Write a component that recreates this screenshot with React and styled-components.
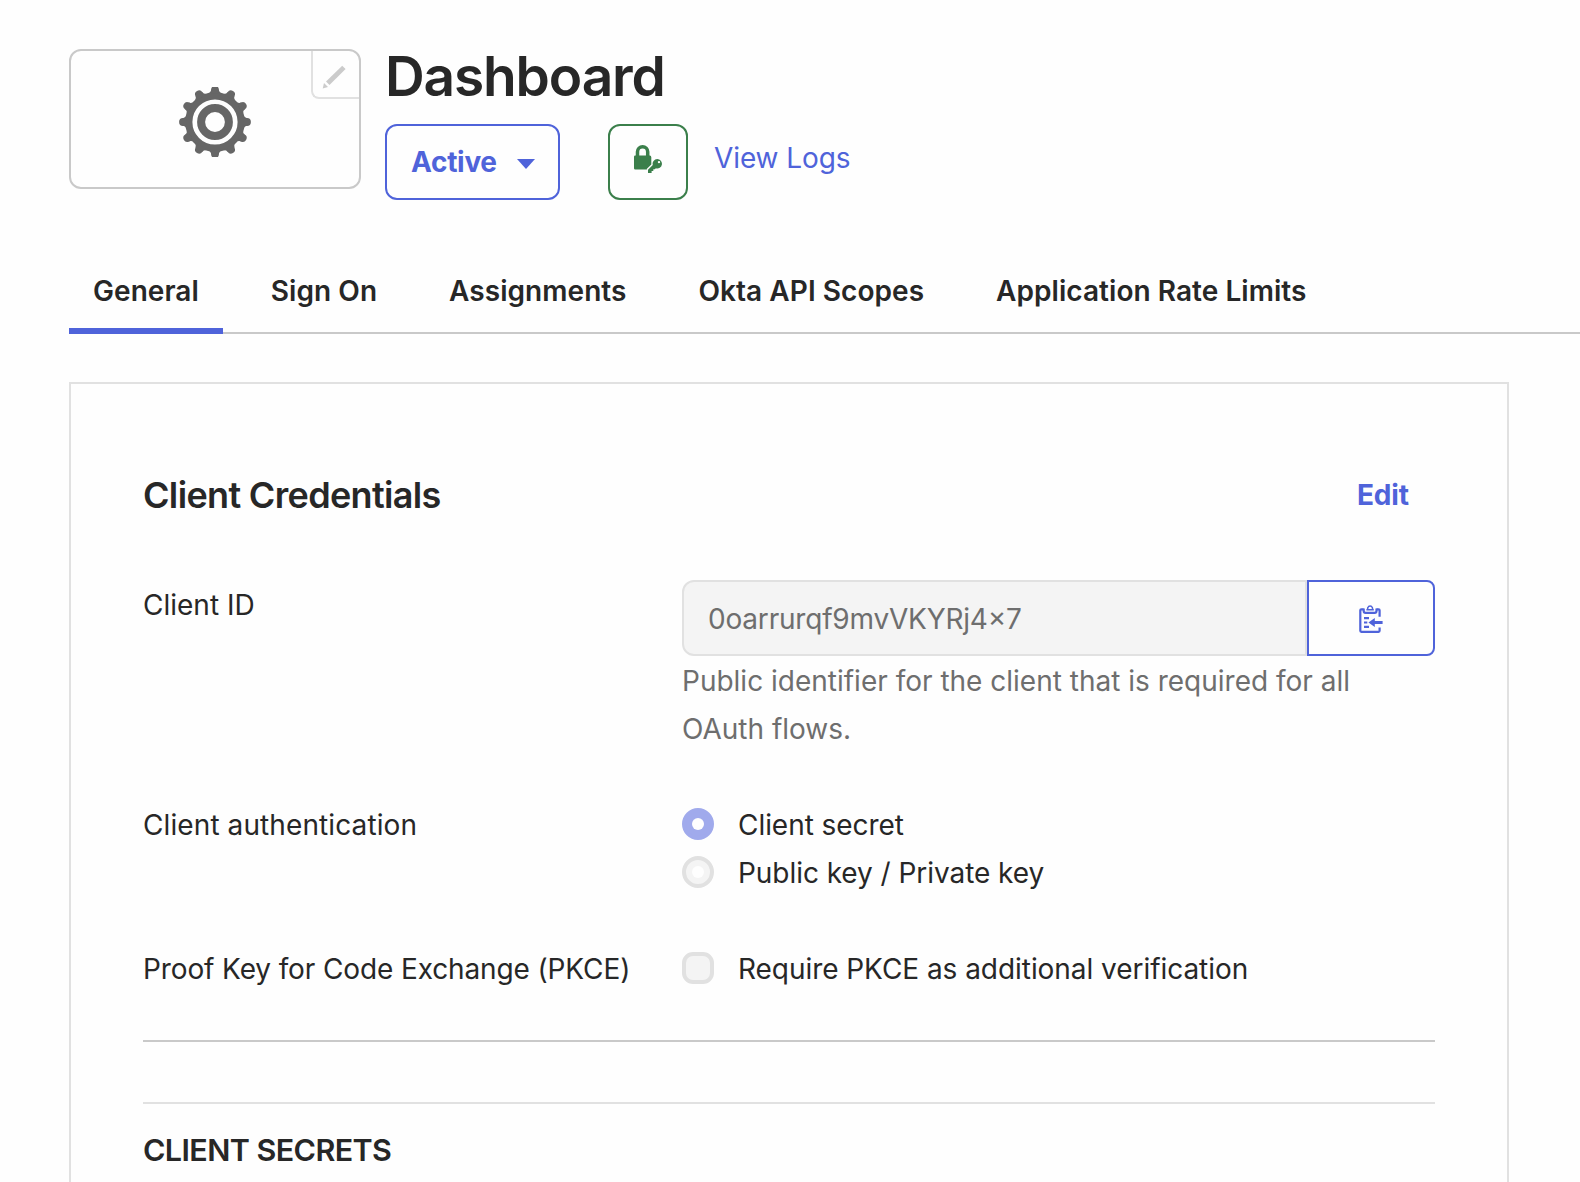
import React from "react";
import styled, { createGlobalStyle, css } from "styled-components";

const color = {
  blue: "#4f63da",
  green: "#3b7f4b",
  ink: "#272727",
  muted: "#6e6e6e",
  line: "#c9c9c9",
  lineSoft: "#e1e1e1",
  field: "#f4f4f4",
  page: "#fefefe",
};

const GlobalStyle = createGlobalStyle`
  *, *::before, *::after { box-sizing: border-box; }
  html, body { margin: 0; padding: 0; background: ${color.page}; }
  body { overflow: hidden; }
`;

const Page = styled.main`
  width: 1580px;
  height: 1182px;
  overflow: hidden;
  padding: 46px 0 0 69px;
  background: ${color.page};
  color: ${color.ink};
  font-family: Inter, "Liberation Sans", sans-serif;
  font-size: 28px;
  line-height: 48px;
`;

const Header = styled.header`
  display: flex;
  align-items: flex-start;
  gap: 24px;
  height: 154px;
`;

const LogoCard = styled.div`
  position: relative;
  display: flex;
  align-items: center;
  justify-content: center;
  width: 292px;
  height: 140px;
  margin-top: 3px;
  border: 2px solid ${color.line};
  border-radius: 12px;
  padding: 5px 0 0 0;
`;

const EditCorner = styled.button`
  position: absolute;
  top: 0;
  right: 0;
  display: flex;
  align-items: flex-start;
  width: 48px;
  height: 48px;
  padding: 14px 0 0 9px;
  background: none;
  border: solid ${color.lineSoft};
  border-width: 0 0 2px 2px;
  border-radius: 0 0 0 8px;
`;

const Title = styled.h1`
  margin: 0 0 18px;
  font-size: 55px;
  line-height: 60px;
  font-weight: 600;
  letter-spacing: -1.15px;
`;

const Actions = styled.div`
  display: flex;
  align-items: flex-start;
`;

const outlined = css`
  display: flex;
  align-items: center;
  height: 76px;
  background: ${color.page};
  border: 2px solid currentColor;
  border-radius: 12px;
  font: inherit;
`;

const StatusButton = styled.button`
  ${outlined}
  width: 175px;
  padding: 0 0 0 24px;
  gap: 20px;
  color: ${color.blue};
  font-weight: 700;
  letter-spacing: -0.3px;
`;

const Caret = styled.span`
  width: 0;
  height: 0;
  margin-top: 4px;
  border: solid transparent;
  border-width: 10px 9.5px 0;
  border-top-color: currentColor;
`;

const SecurityButton = styled.button`
  ${outlined}
  justify-content: center;
  width: 80px;
  margin: 0 26px 0 48px;
  padding: 0 0 6px;
  color: ${color.green};
`;

const Link = styled.a`
  margin-top: ${(p) => p.$top || 0}px;
  margin-right: ${(p) => p.$right || 0}px;
  color: ${color.blue};
  font-weight: ${(p) => (p.$strong ? 700 : 400)};
  letter-spacing: -0.1px;
  text-decoration: none;
`;

const Tabs = styled.nav`
  display: flex;
  gap: 24px;
  height: 67px;
  margin-top: 67px;
  border-bottom: 2px solid ${color.line};
`;

const Tab = styled.a`
  height: 67px;
  padding: 0 24px;
  font-weight: 600;
  letter-spacing: 0.05px;
  white-space: nowrap;
  border-bottom: 6px solid ${(p) => (p.$active ? color.blue : "transparent")};
`;

const Panel = styled.section`
  width: 1440px;
  height: 900px;
  margin-top: 48px;
  padding: 87px 72px 0;
  border: 2px solid ${color.lineSoft};
`;

const PanelHead = styled.div`
  display: flex;
  justify-content: space-between;
  margin-bottom: 61px;
`;

const PanelTitle = styled.h2`
  margin: 0;
  font-size: 36px;
  line-height: 48px;
  font-weight: 600;
  letter-spacing: -0.66px;
`;

const Field = styled.div`
  display: grid;
  grid-template-columns: 539px 1fr;
  margin-bottom: ${(p) => p.$gap}px;
`;

const Label = styled.div`
  padding-top: ${(p) => p.$top || 0}px;
  letter-spacing: ${(p) => p.$tracking || 0}px;
  white-space: nowrap;
`;

const InputGroup = styled.div`
  display: flex;
  height: 76px;
`;

const ReadOnlyValue = styled.div`
  flex: 1;
  padding: 13px 24px 0;
  color: ${color.muted};
  background: ${color.field};
  border: 2px solid ${color.lineSoft};
  border-radius: 12px 0 0 12px;
  letter-spacing: -0.2px;
  font-feature-settings: "calt" 1;
`;

const CopyButton = styled.button`
  ${outlined}
  justify-content: center;
  width: 128px;
  padding: 2px 0 0;
  color: ${color.blue};
  border-radius: 0 8px 8px 0;
`;

const Hint = styled.p`
  width: 700px;
  margin: 1px 0 0;
  color: ${color.muted};
`;

const Option = styled.label`
  display: flex;
  gap: 24px;
  letter-spacing: -0.05px;
  white-space: nowrap;
`;

const Radio = styled.span`
  display: flex;
  align-items: center;
  justify-content: center;
  width: 32px;
  height: 32px;
  margin-top: 7px;
  border-radius: 50%;
  border: 4px solid ${(p) => (p.$on ? "#a0aaec" : color.lineSoft)};
  background: ${(p) => (p.$on ? "#a0aaec" : color.field)};

  &::after {
    content: "";
    width: 12px;
    height: 12px;
    border-radius: 50%;
    background: ${color.page};
  }
`;

const Checkbox = styled.span`
  width: 32px;
  height: 32px;
  margin-top: 7px;
  border-radius: 11px;
  border: 4px solid ${color.lineSoft};
  background: ${color.field};
`;

const Rule = styled.hr`
  height: 2px;
  margin: 0 0 ${(p) => p.$gap}px;
  border: 0;
  background: ${(p) => (p.$soft ? color.lineSoft : color.line)};
`;

const SubTitle = styled.h3`
  margin: 0;
  font-size: 30.5px;
  line-height: 48px;
  font-weight: 600;
  letter-spacing: -0.6px;
`;

const TEETH = Array.from({ length: 12 }, (_, i) => i * 30);

function GearIcon() {
  return (
    <svg width="72" height="70" viewBox="-36 -35 72 70">
      <defs>
        <filter id="soft" x="-10%" y="-10%" width="120%" height="120%">
          <feGaussianBlur stdDeviation="0.6" />
        </filter>
      </defs>
      <g filter="url(#soft)" stroke="#666" fill="none">
        <circle r="26.2" strokeWidth="7.2" />
        <circle r="13.9" strokeWidth="8" />
        {TEETH.map((a) => (
          <g key={a} transform={`rotate(${a})`}>
            <path d="M-7.4 -28 Q-4 -29.6 -3.8 -32.4 H3.8 Q4 -29.6 7.4 -28 Z" fill="#666" stroke="none" />
            <circle cy="-32" r="3.9" fill="#666" stroke="none" />
          </g>
        ))}
      </g>
    </svg>
  );
}

function PencilIcon() {
  return (
    <svg width="24" height="24" viewBox="0 0 24 24" fill="#cbcbcb">
      <path d="M20.2 .8 L23.6 4.1 L7.5 20 L4 16.4 Z" />
      <path d="M.7 23.6 L2 18.1 L6 22.1 Z" />
    </svg>
  );
}

function LockKeyIcon() {
  return (
    <svg width="28" height="28" viewBox="0 0 28 28" fill="currentColor">
      <path d="M3.5 12 V6.85 A5.1 5.1 0 0 1 13.7 6.85 V12" fill="none" stroke="currentColor" strokeWidth="3.5" />
      <path d="M1.2 10.5 H15.8 Q17.3 10.7 17.3 12.3 V19.5 L12.9 23.8 V24.4 H1.2 Q0 24.4 0 23.2 V11.7 Q0 10.5 1.2 10.5 Z" />
      <path
        fillRule="evenodd"
        d="M23.3 14 A4.7 4.7 0 1 1 21.9 23.2 L20.8 24.3 H19.3 V26 H17.6 V28 H14 V24.8 L18.8 20 A4.7 4.7 0 0 1 23.3 14 Z M25 15.9 A1.2 1.2 0 1 0 25 18.3 A1.2 1.2 0 1 0 25 15.9 Z"
      />
    </svg>
  );
}

function ClipboardIcon() {
  return (
    <svg width="24" height="28" viewBox="0 0 24 28" fill="none" stroke="currentColor" strokeWidth="2.2">
      <path d="M4.6 4.3 H2.3 Q1.3 4.3 1.3 5.3 V25.8 Q1.3 26.8 2.3 26.8 H19.6 Q20.6 26.8 20.6 25.8 V22.6" />
      <path d="M17.5 4.3 H19.6 Q20.6 4.3 20.6 5.3 V11.8" />
      <path d="M4.7 3.4 V6 Q4.7 7.8 6.5 7.8 H15.7 Q17.5 7.8 17.5 6 V3.4" />
      <path d="M7.4 4.8 C8.8 4.8 8.6 3.4 8.9 2.6 A2.3 2.3 0 0 1 13.3 2.6 C13.6 3.4 13.4 4.8 14.8 4.8 Z" strokeWidth="1.5" />
      <path d="M5 13.1 H10 M5 17.5 H8.3 M5 21.9 H10" />
      <path d="M9.4 17.5 L15.8 12.9 V15.9 H23.6 V19.1 H15.8 V22.1 Z" fill="currentColor" stroke="none" />
    </svg>
  );
}

const TABS = ["General", "Sign On", "Assignments", "Okta API Scopes", "Application Rate Limits"];

export default function App() {
  return (
    <>
      <GlobalStyle />
      <Page>
        <Header>
          <LogoCard>
            <GearIcon />
            <EditCorner aria-label="Edit logo">
              <PencilIcon />
            </EditCorner>
          </LogoCard>
          <div>
            <Title>Dashboard</Title>
            <Actions>
              <StatusButton>
                Active
                <Caret />
              </StatusButton>
              <SecurityButton aria-label="Security">
                <LockKeyIcon />
              </SecurityButton>
              <Link $top={10}>View Logs</Link>
            </Actions>
          </div>
        </Header>

        <Tabs>
          {TABS.map((name, i) => (
            <Tab key={name} $active={i === 0}>
              {name}
            </Tab>
          ))}
        </Tabs>

        <Panel>
          <PanelHead>
            <PanelTitle>Client Credentials</PanelTitle>
            <Link $strong $right={26}>
              Edit
            </Link>
          </PanelHead>

          <Field $gap={48}>
            <Label $top={1}>Client ID</Label>
            <div>
              <InputGroup>
                <ReadOnlyValue>0oarrurqf9mvVKYRj4x7</ReadOnlyValue>
                <CopyButton aria-label="Copy to clipboard">
                  <ClipboardIcon />
                </CopyButton>
              </InputGroup>
              <Hint>Public identifier for the client that is required for all OAuth flows.</Hint>
            </div>
          </Field>

          <Field $gap={48}>
            <Label $tracking={0.1}>Client authentication</Label>
            <div>
              <Option>
                <Radio $on />
                Client secret
              </Option>
              <Option>
                <Radio />
                Public key / Private key
              </Option>
            </div>
          </Field>

          <Field $gap={47}>
            <Label $tracking={-0.12}>Proof Key for Code Exchange (PKCE)</Label>
            <Option>
              <Checkbox />
              Require PKCE as additional verification
            </Option>
          </Field>

          <Rule $gap={60} />
          <Rule $soft $gap={22} />
          <SubTitle>CLIENT SECRETS</SubTitle>
        </Panel>
      </Page>
    </>
  );
}
